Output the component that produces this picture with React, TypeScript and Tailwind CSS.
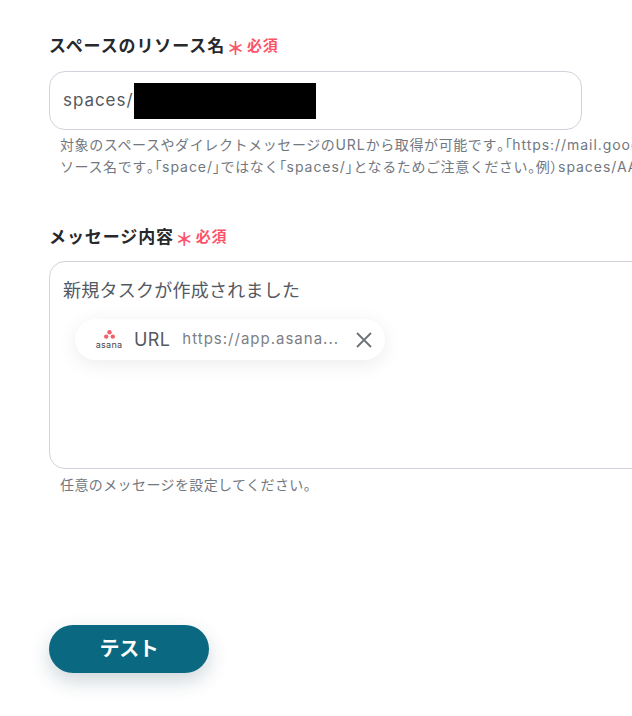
import React from "react";

const font = "font-['Inter','Noto_Sans_CJK_JP',sans-serif]";

// 約物だけ詰める
const Tight = ({ children }: { children: React.ReactNode }) => (
  <span className="[font-feature-settings:'palt']">{children}</span>
);

const Latin = ({ children }: { children: React.ReactNode }) => (
  <span className="tracking-[0.95px]">{children}</span>
);

const FieldLabel = ({ children }: { children: React.ReactNode }) => (
  <div className="flex items-center h-6">
    <span className="text-[17px] leading-6 font-bold text-[#27282c] tracking-[0.9px]">{children}</span>
    <span className="ml-[3px] mt-[5px] text-[18px] leading-6 font-bold text-[#fb5368] [font-feature-settings:'palt']">＊</span>
    <span className="ml-[4px] text-[15px] leading-6 font-bold text-[#fb5368] tracking-[0.8px]">必須</span>
  </div>
);

const AsanaLogo = () => (
  <div className="w-[26px] flex flex-col items-center">
    <svg width="11" height="9" viewBox="0 0 11 9">
      <circle cx="5.5" cy="2.2" r="2.2" fill="#f0616d" />
      <circle cx="2.2" cy="6.6" r="2.2" fill="#f0616d" />
      <circle cx="8.8" cy="6.6" r="2.2" fill="#f0616d" />
    </svg>
    <span className="text-[9px] leading-[8px] mt-[2px] text-[#3f4450] tracking-[0.3px] font-['Inter',sans-serif]">asana</span>
  </div>
);

export default function App() {
  return (
    <div className={`${font} w-[632px] h-[716px] overflow-hidden bg-white pl-[49px] pt-[34px]`}>
      <FieldLabel>スペースのリソース名</FieldLabel>
      <div className="mt-[13px] w-[533px] h-[59px] rounded-[16px] border border-[#d0d3dc] flex items-center pl-[13px]">
        <span className="w-[71px] text-[17px] text-[#54585f] tracking-[0.95px]">spaces/</span>
        <div className="w-[182px] h-9 bg-black"></div>
      </div>
      <div className="mt-[4px] ml-[11px] w-[640px] text-[14px] leading-[22px] text-[#727880] tracking-[0.6px] whitespace-nowrap">
        <p>対象のスペースやダイレクトメッセージの<Latin>URL</Latin>から取得が可能です<Tight>。「</Tight><Latin>https://mail.google.com</Latin></p>
        <p>ソース名です<Tight>。「</Tight><Latin>space/</Latin><Tight>」</Tight>ではなく<Tight>「</Tight><Latin>spaces/</Latin><Tight>」</Tight>となるためご注意ください<Tight>。</Tight>例<Tight>）</Tight><Latin>spaces/AAAAAAA</Latin></p>
      </div>

      <div className="mt-[47px]">
        <FieldLabel>メッセージ内容</FieldLabel>
      </div>
      <div className="mt-[12px] w-[700px] h-[208px] rounded-[16px] border border-[#d0d3dc] pl-[13px] pt-[16px]">
        <p className="text-[18px] leading-[26px] text-[#54585f] tracking-[0.25px]">新規タスクが作成されました</p>
        <div className="mt-[15px] ml-[12px] w-[310px] h-[41px] rounded-full bg-white shadow-[0_4px_20px_rgba(0,0,0,0.08)] flex items-center pl-[21px]">
          <AsanaLogo />
          <span className="ml-[12px] text-[18px] text-[#54585f] tracking-[0.4px]">URL</span>
          <span className="ml-[12px] text-[15px] text-[#7b8087] tracking-[1px]">https://app.asana...</span>
          <svg className="ml-[16px]" width="18" height="18" viewBox="0 0 18 18" fill="none" stroke="#6d7278" strokeWidth="1.8">
            <path d="M2 2 L16 16 M16 2 L2 16" />
          </svg>
        </div>
      </div>
      <p className="mt-[5px] ml-[11px] text-[14px] leading-[22px] text-[#727880] tracking-[0.4px]">任意のメッセージを設定してください。</p>

      <button className="mt-[129px] w-[160px] h-[48px] rounded-full bg-[#0a6880] text-white text-[20px] font-bold tracking-[-0.3px] shadow-[0_8px_20px_rgba(10,50,70,0.2)]">
        テスト
      </button>
    </div>
  );
}
